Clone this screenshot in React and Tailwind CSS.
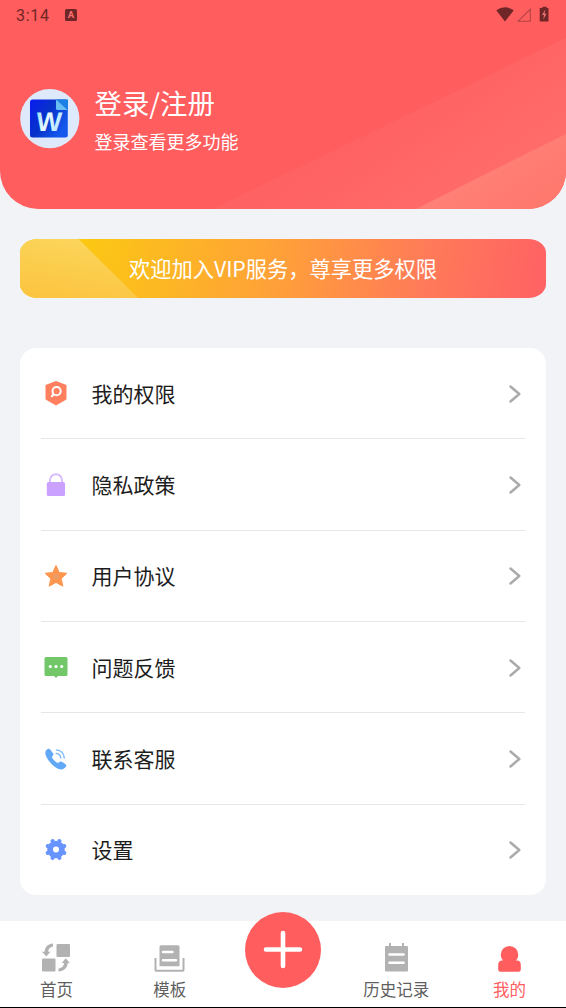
import React from "react";

function StatusBar() {
  return (
    <div className="flex h-[29px] items-center justify-between pl-[16px] pr-[15px] font-['Roboto',sans-serif] text-[#702626]">
      <div className="flex items-center gap-[15px]">
        <span className="mt-[2px] text-[16px] leading-[18px] tracking-[0.7px]">3:14</span>
        <svg width="12" height="12" viewBox="0 0 12 12">
          <rect width="12" height="12" rx="1.5" fill="#702626" />
          <text x="6" y="9.300" textAnchor="middle" fontSize="9.500" fontWeight="700" fill="#ff6f70">A</text>
        </svg>
      </div>
      <svg width="56" height="18" viewBox="0 0 56 18">
        <path d="M1.200 4.200Q10.100 -1.600 18.800 4.200L10 15.500Z" fill="#702626" />
        <path d="M35.300 2.800V14.700H23Z" transform="translate(0 .5)" fill="none" stroke="#b14446" strokeWidth="1.100" />
        <path d="M47.400 .800h4.300v1.200h1.800v13.400h-8.800V2h2.700Z" fill="#702626" />
        <path d="m50.300 3.500-3.300 5.500h2l-.7 4.400 3.200-5.700h-2Z" fill="#e87374" />
      </svg>
    </div>
  );
}

function Avatar() {
  return (
    <svg width="60" height="60" viewBox="0 0 60 60" className="shrink-0">
      <defs>
        <linearGradient id="doc" x1="0" y1="0" x2="1" y2="0.6">
          <stop offset="0" stopColor="#0a1cf2" />
          <stop offset="0.5" stopColor="#0732c8" />
          <stop offset="1" stopColor="#1558ee" />
        </linearGradient>
        <linearGradient id="letter" x1="0" y1="0" x2="1" y2="0.4">
          <stop offset="0" stopColor="#8fdcff" />
          <stop offset="0.5" stopColor="#e9f8ff" />
          <stop offset="1" stopColor="#b7e8ff" />
        </linearGradient>
      </defs>
      <circle cx="29.800" cy="29.600" r="29.600" fill="#dfe9fc" />
      <rect x="10" y="10.500" width="37.800" height="38" rx="2.500" fill="url(#doc)" />
      <path d="M36 10.500H48V21H38.500L36 19Z" fill="#1c7fe4" />
      <path d="M36 10.500 47.500 21H37.500a1.500 1.500 0 0 1-1.500-1.500Z" fill="#69bdf3" />
      <text x="29" y="42" textAnchor="middle" transform="translate(2.400 -0.200) skewX(-4)" fontSize="27" fontWeight="700" className="font-['Liberation_Sans',sans-serif]" fill="url(#letter)">W</text>
    </svg>
  );
}

function Header() {
  return (
    <header className="relative h-[209px] overflow-hidden rounded-b-[38px] bg-[#ff5d5e]">
      <svg className="absolute inset-0" width="566" height="209" viewBox="0 0 566 209">
        <defs>
          <linearGradient id="band" x1="390" y1="120" x2="450" y2="209" gradientUnits="userSpaceOnUse">
            <stop offset="0" stopColor="#ff6263" />
            <stop offset="1" stopColor="#ff6c69" />
          </linearGradient>
          <linearGradient id="corner" x1="490" y1="165" x2="520" y2="209" gradientUnits="userSpaceOnUse">
            <stop offset="0" stopColor="#ff8076" />
            <stop offset="1" stopColor="#ff796f" />
          </linearGradient>
        </defs>
        <path d="M213 209 566 38V209Z" fill="url(#band)" />
        <path d="M416 209 566 134V209Z" fill="url(#corner)" />
      </svg>
      <div className="relative">
        <StatusBar />
        <div className="mt-[54px] flex gap-[14.500px] pl-[20px] text-white">
          <div className="pt-[6px]">
            <Avatar />
          </div>
          <div>
            <h1 className="text-[27.400px] leading-[38px]">登录/注册</h1>
            <p className="mt-[6px] text-[18px] leading-[28px]">登录查看更多功能</p>
          </div>
        </div>
      </div>
    </header>
  );
}

function VipBanner() {
  return (
    <div className="relative mx-[20px] mt-[30px] flex h-[58.500px] items-center justify-center overflow-hidden rounded-[18px/14px] bg-[linear-gradient(100deg,#fbc813_12%,#ff9f3a_50%,#ff7b58_76%,#ff6363_98%)]">
      <svg className="absolute left-0 top-0" width="120" height="59" viewBox="0 0 120 59">
        <defs>
          <linearGradient id="shine" x1="0.700" y1="0" x2="0.400" y2="1">
            <stop offset="0" stopColor="#fbd65c" />
            <stop offset="1" stopColor="#fcc540" />
          </linearGradient>
        </defs>
        <path d="M0 0H58.500L118 59H0Z" fill="url(#shine)" />
      </svg>
      <span className="relative -mt-[1px] text-[21.250px] leading-[30px] text-white">欢迎加入VIP服务，尊享更多权限</span>
    </div>
  );
}

const menu = [
  {
    label: "我的权限",
    icon: (
      <>
        <path d="M14 2 24.500 6V19.500q0 1-1 1.500L14 26.500 4.500 21q-1-.5-1-1.500V6Z" fill="#ff7f5e" />
        <circle cx="14.600" cy="12.200" r="4.100" fill="none" stroke="#fff" strokeWidth="2" />
        <path d="m11.600 15.200-2.300 2.700" stroke="#fff" strokeWidth="2.200" />
      </>
    ),
  },
  {
    label: "隐私政策",
    icon: (
      <>
        <path d="M8 12V9.200a6 6 0 0 1 12 0V12" fill="none" stroke="#d9bcff" strokeWidth="1.900" />
        <rect x="4.800" y="11" width="18.200" height="14" rx="1.500" fill="#cba1ff" />
      </>
    ),
  },
  {
    label: "用户协议",
    icon: (
      <>
        <path d="m14 3.500 3.200 7 7.700.8-5.700 5.300 1.600 7.600-6.800-3.800-6.800 3.800 1.600-7.600-5.700-5.300 7.700-.8Z" fill="#ff9650" stroke="#ff9650" strokeWidth="1" strokeLinejoin="round" />
        <circle cx="14" cy="14.500" r="2.500" fill="#e99d6c" />
      </>
    ),
  },
  {
    label: "问题反馈",
    icon: (
      <>
        <path d="M4 4h20q1.500 0 1.500 1.500v16q0 1.500-1.500 1.500H16l-2 2-2-2H4Q2.500 23 2.500 21.500v-16Q2.500 4 4 4Z" fill="#72c868" />
        <g fill="#fff">
          <circle cx="8.300" cy="13.500" r="1.600" />
          <circle cx="14" cy="13.500" r="1.600" />
          <circle cx="19.700" cy="13.500" r="1.600" />
        </g>
      </>
    ),
  },
  {
    label: "联系客服",
    icon: (
      <>
        <path d="M5 4.500c1-.9 2.400-1 3.200 0L11 8.200c.8 1 .5 2-.4 2.800-1 .8-.7 1.500 0 2.500 1.300 1.700 2.500 3 4 4 1 .7 1.800.7 2.500-.2.800-1 1.700-1.200 2.800-.5l3.400 2.200c1.200.8 1.200 2 .4 3-2 2.600-4.700 3.200-8.200 1.400C10.500 20.800 5.800 15.500 3.800 10.500 3 8 3.200 6 5 4.500Z" fill="#61a8f7" />
        <g fill="none" stroke="#83bdfa" strokeWidth="1.500" strokeLinecap="round">
          <path d="M14.500 5c4.500.2 7.500 3.500 7.800 8" />
          <path d="M14.200 8.500c2.500.2 4.300 1.900 4.500 4.500" />
        </g>
      </>
    ),
  },
  {
    label: "设置",
    icon: (
      <>
        <circle cx="14" cy="13.500" r="8.800" fill="#6794ff" />
        <g stroke="#6794ff" strokeWidth="4.200" strokeLinecap="round">
          <path d="M10.600 5.300 17.400 21.700M17.400 5.300 10.600 21.700M5.800 10.100 22.200 16.900M5.800 16.900 22.200 10.100" />
        </g>
        <circle cx="14" cy="13.500" r="3" fill="#fff" />
      </>
    ),
  },
];

function MenuRow({ label, icon, last }) {
  return (
    <li className={last ? "flex flex-1 items-center" : "flex flex-1 items-center border-b border-[#e6e6e8]"}>
      <svg width="28" height="28" viewBox="0 0 28 28" className="ml-[0.500px] mt-[0.500px]">
        {icon}
      </svg>
      <span className="-mt-[1px] ml-[22px] text-[21px] leading-[30px] text-[#1d1d1d]">{label}</span>
      <svg width="14" height="20" viewBox="0 0 14 20" className="ml-auto mr-[3px] mt-[1px]">
        <path d="m2.500 2.500 8.800 7.500-8.800 7.500" fill="none" stroke="#ababab" strokeWidth="2.500" strokeLinecap="round" strokeLinejoin="round" />
      </svg>
    </li>
  );
}

const tabs = [
  {
    label: "首页",
    icon: (
      <>
        <path d="M16.500 2H28q1 0 1 1v11q0 1-1 1H16.500q-1 0-1-1V3q0-1 1-1Z" />
        <rect x="1" y="16.500" width="13.500" height="13" rx="1" />
        <path d="M12 1.500v3C8.800 5.200 7.500 7 7.200 9.700h2.300L5.300 14.500 1 9.700h2.500C4 4.800 7 1.800 12 1.500Z" />
        <path d="M17.500 29.500v-3c3.700-.5 5.200-2.500 5.600-5.500h-2.400l4-4.700 4.100 4.700h-2c-.4 5-3.800 8.300-9.300 8.500Z" />
      </>
    ),
  },
  {
    label: "模板",
    icon: (
      <>
        <path d="M7 3.300H24q1.500 0 1.500 1.500V24.300H5.500V4.800Q5.500 3.300 7 3.300Z" />
        <path d="M1.500 16v12q0 .7.700.7h26.600q.7 0 .7-.7V16" fill="none" stroke="#b2b2b2" strokeWidth="2" />
        <path d="M9 10h9.500M9 18.300h13" stroke="#fff" strokeWidth="2.500" strokeLinecap="round" />
      </>
    ),
  },
  null,
  {
    label: "历史记录",
    icon: (
      <>
        <path d="M5 4H26q1 0 1 1V28.500q0 1-1 1H5q-1 0-1-1V5q0-1 1-1Z" />
        <path d="M9 1v5M22 1v5" stroke="#b2b2b2" strokeWidth="2" />
        <path d="M8.500 12.500h14M8.500 20.700h14" stroke="#fff" strokeWidth="2.500" strokeLinecap="round" />
      </>
    ),
  },
  {
    label: "我的",
    active: true,
    icon: (
      <>
        <circle cx="15.500" cy="12.700" r="8.800" />
        <path d="M9 16.500h13v4H9Z" />
        <path d="M8 18.500h15q3.800 0 3.800 4.500v4.400q0 2.300-2.300 2.300h-18q-2.300 0-2.300-2.300V23q0-4.500 3.800-4.500Z" />
      </>
    ),
  },
];

function TabBar() {
  return (
    <nav className="relative grid h-[87px] grid-cols-5 border-b border-black bg-white">
      {tabs.map((tab, i) =>
        tab ? (
          <div key={i} className="flex flex-col items-center pt-[20.500px]">
            <svg width="31" height="31" viewBox="0 0 31 31" fill={tab.active ? "#ff5d5e" : "#b2b2b2"}>
              {tab.icon}
            </svg>
            <span className={tab.active ? "mt-[4.500px] text-[16.500px] leading-[24px] text-[#ff5d5e]" : "mt-[4.500px] text-[16.500px] leading-[24px] text-[#5f5f5f]"}>
              {tab.label}
            </span>
          </div>
        ) : (
          <button key={i} className="-mt-[9px] flex size-[76px] items-center justify-center justify-self-center rounded-full bg-[#ff5d5e]">
            <svg width="40" height="40" viewBox="0 0 40 40">
              <path d="M20 3V36M3 19.500H37" stroke="#fff" strokeWidth="4.600" strokeLinecap="round" />
            </svg>
          </button>
        )
      )}
    </nav>
  );
}

export default function App() {
  return (
    <div className="flex h-[1008px] w-[566px] flex-col overflow-hidden bg-[#f2f3f7] font-['Noto_Sans_CJK_SC',sans-serif]">
      <Header />
      <VipBanner />
      <ul className="mx-[20px] mt-[50.500px] flex h-[547px] flex-col rounded-[16px] bg-white px-[21px]">
        {menu.map((item, i) => (
          <MenuRow key={item.label} label={item.label} icon={item.icon} last={i === menu.length - 1} />
        ))}
      </ul>
      <div className="mt-auto">
        <TabBar />
      </div>
    </div>
  );
}
